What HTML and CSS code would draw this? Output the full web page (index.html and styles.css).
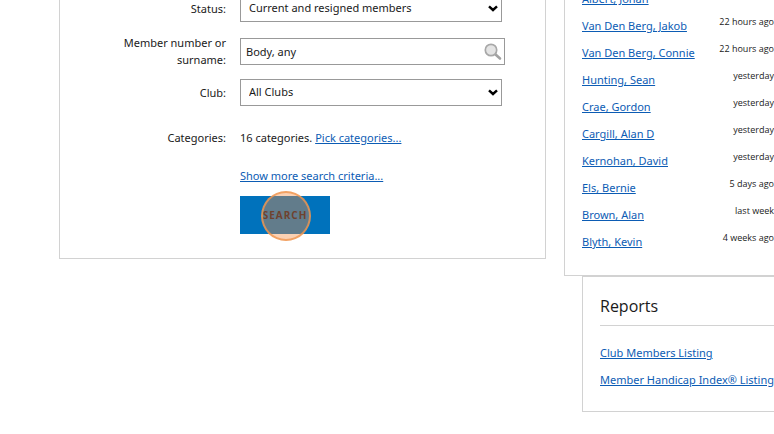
FILE: index.html
```
<!DOCTYPE html>
<html lang="en">
<head>
    <meta charset="UTF-8">
    <meta name="viewport" content="width=device-width, initial-scale=1.0">
    <title>Member search</title>
    <link rel="stylesheet" href="styles.css">
</head>
<body>
    <div class="page">
        <form class="search-panel">
            <div class="row">
                <label for="status">Status:</label>
                <div class="select">
                    <select id="status">
                        <option>Current and resigned members</option>
                    </select>
                    <svg class="arrow" viewBox="0 0 10 7"><path d="M1 1.3 L5 5 L9 1.3"/></svg>
                </div>
            </div>
            <div class="row row-member">
                <label for="member">Member number or surname:</label>
                <div class="textbox">
                    <input type="text" id="member" value="Body, any">
                    <svg class="magnifier" viewBox="0 0 18 18">
                        <path d="M11 11 L16 15.5" stroke="#a2a2a2" stroke-width="2.6" stroke-linecap="round"/>
                        <circle cx="7" cy="7" r="5.7" fill="#e4e4e4" stroke="#a8a8a8" stroke-width="1.7"/>
                    </svg>
                </div>
            </div>
            <div class="row">
                <label for="club">Club:</label>
                <div class="select">
                    <select id="club">
                        <option>All Clubs</option>
                    </select>
                    <svg class="arrow" viewBox="0 0 10 7"><path d="M1 1.3 L5 5 L9 1.3"/></svg>
                </div>
            </div>
            <div class="row row-categories">
                <span class="caption">Categories:</span>
                <div>16 categories. <a href="#">Pick categories...</a></div>
            </div>
            <div class="actions">
                <a href="#">Show more search criteria...</a>
                <div class="submit">
                    <button type="submit">SEARCH</button>
                    <span class="click-marker"></span>
                </div>
            </div>
        </form>

        <div class="sidebar">
            <div class="recent">
                <ul>
                    <li><a href="#">Albert, Johan</a><span class="time">22 hours ago</span></li>
                    <li><a href="#">Van Den Berg, Jakob</a><span class="time">22 hours ago</span></li>
                    <li><a href="#">Van Den Berg, Connie</a><span class="time">22 hours ago</span></li>
                    <li><a href="#">Hunting, Sean</a><span class="time">yesterday</span></li>
                    <li><a href="#">Crae, Gordon</a><span class="time">yesterday</span></li>
                    <li><a href="#">Cargill, Alan D</a><span class="time">yesterday</span></li>
                    <li><a href="#">Kernohan, David</a><span class="time">yesterday</span></li>
                    <li><a href="#">Els, Bernie</a><span class="time">5 days ago</span></li>
                    <li><a href="#">Brown, Alan</a><span class="time">last week</span></li>
                    <li><a href="#">Blyth, Kevin</a><span class="time">4 weeks ago</span></li>
                </ul>
            </div>
            <div class="reports">
                <h2>Reports</h2>
                <ul>
                    <li><a href="#">Club Members Listing</a></li>
                    <li><a href="#">Member Handicap Index® Listing</a></li>
                </ul>
            </div>
        </div>
    </div>
</body>
</html>
```
FILE: styles.css
```
* {
    box-sizing: border-box;
}
body {
    margin: 0;
    overflow: hidden;
    background-color: #fff;
    color: #1a1a1a;
    font-family: "Noto Sans", "Open Sans", sans-serif;
    font-size: 11px;
    line-height: 17px;
}
a {
    color: #0c5cb4;
    text-underline-offset: 1px;
}
ul {
    list-style: none;
    margin: 0;
    padding: 0;
}
/* page is scrolled down a little, the top is cut off */
.page {
    display: grid;
    grid-template-columns: minmax(0, 487fr) minmax(0, 210fr);
    gap: 18px;
    align-items: start;
    margin-top: -14px;
    padding-left: 59px;
}

/* search form */
.search-panel {
    border: 1px solid #d2d2d2;
    border-top: none;
    padding: 9px 40px 24px;
}
.row {
    display: grid;
    grid-template-columns: 126px minmax(0, 1fr);
    gap: 14px;
    align-items: center;
}
.row-member {
    margin: 12px 0 11px;
}
.row-categories {
    margin: 23px 0 21px;
}
.row label,
.caption {
    text-align: right;
}
.select,
.textbox {
    position: relative;
}
.select {
    margin-right: 3px;
}
select,
input {
    display: block;
    width: 100%;
    height: 27px;
    border: 1px solid #999;
    border-radius: 0;
    background-color: #fff;
    color: #1a1a1a;
    font: inherit;
    appearance: none;
}
select {
    padding: 0 24px 2px 8px;
}
input {
    padding: 0 24px 0 5px;
}
.arrow {
    position: absolute;
    top: 10px;
    right: 4px;
    width: 10px;
    height: 7px;
    fill: none;
    stroke: #000;
    stroke-width: 2.4;
    pointer-events: none;
}
.magnifier {
    position: absolute;
    top: 5px;
    right: 3px;
    width: 18px;
    height: 18px;
}
.actions {
    margin-left: 140px;
}
.submit {
    position: relative;
    width: 90px;
    margin-top: 12px;
}
button {
    display: block;
    width: 100%;
    height: 38px;
    padding: 0;
    border: none;
    background-color: #0072bc;
    color: #170f23;
    font: bold 10px "Open Sans", sans-serif;
    letter-spacing: 1px;
}
.click-marker {
    position: absolute;
    top: -5px;
    left: 21px;
    width: 50px;
    height: 50px;
    border: 2px solid rgba(240, 150, 80, 0.8);
    border-radius: 50%;
    background-color: rgba(245, 140, 65, 0.4);
    pointer-events: none;
}

/* right column */
.recent {
    border: 1px solid #d2d2d2;
    border-width: 0 0 1px 1px;
    padding: 0 0 19px 17px;
}
.recent li {
    display: flex;
    justify-content: space-between;
    height: 27px;
    line-height: 25px;
    white-space: nowrap;
}
.time {
    font-family: "Open Sans", sans-serif;
    font-size: 9px;
    line-height: 18px;
}
.reports {
    margin-left: 18px;
    border: 1px solid #d2d2d2;
    border-right: none;
    padding: 17px 0 18px 17px;
}
.reports h2 {
    margin: 0 0 13px;
    padding-bottom: 7px;
    border-bottom: 1px solid #d2d2d2;
    font-family: "Open Sans", sans-serif;
    font-size: 16px;
    font-weight: normal;
    line-height: 24px;
}
.reports li {
    line-height: 27px;
    white-space: nowrap;
}
```
